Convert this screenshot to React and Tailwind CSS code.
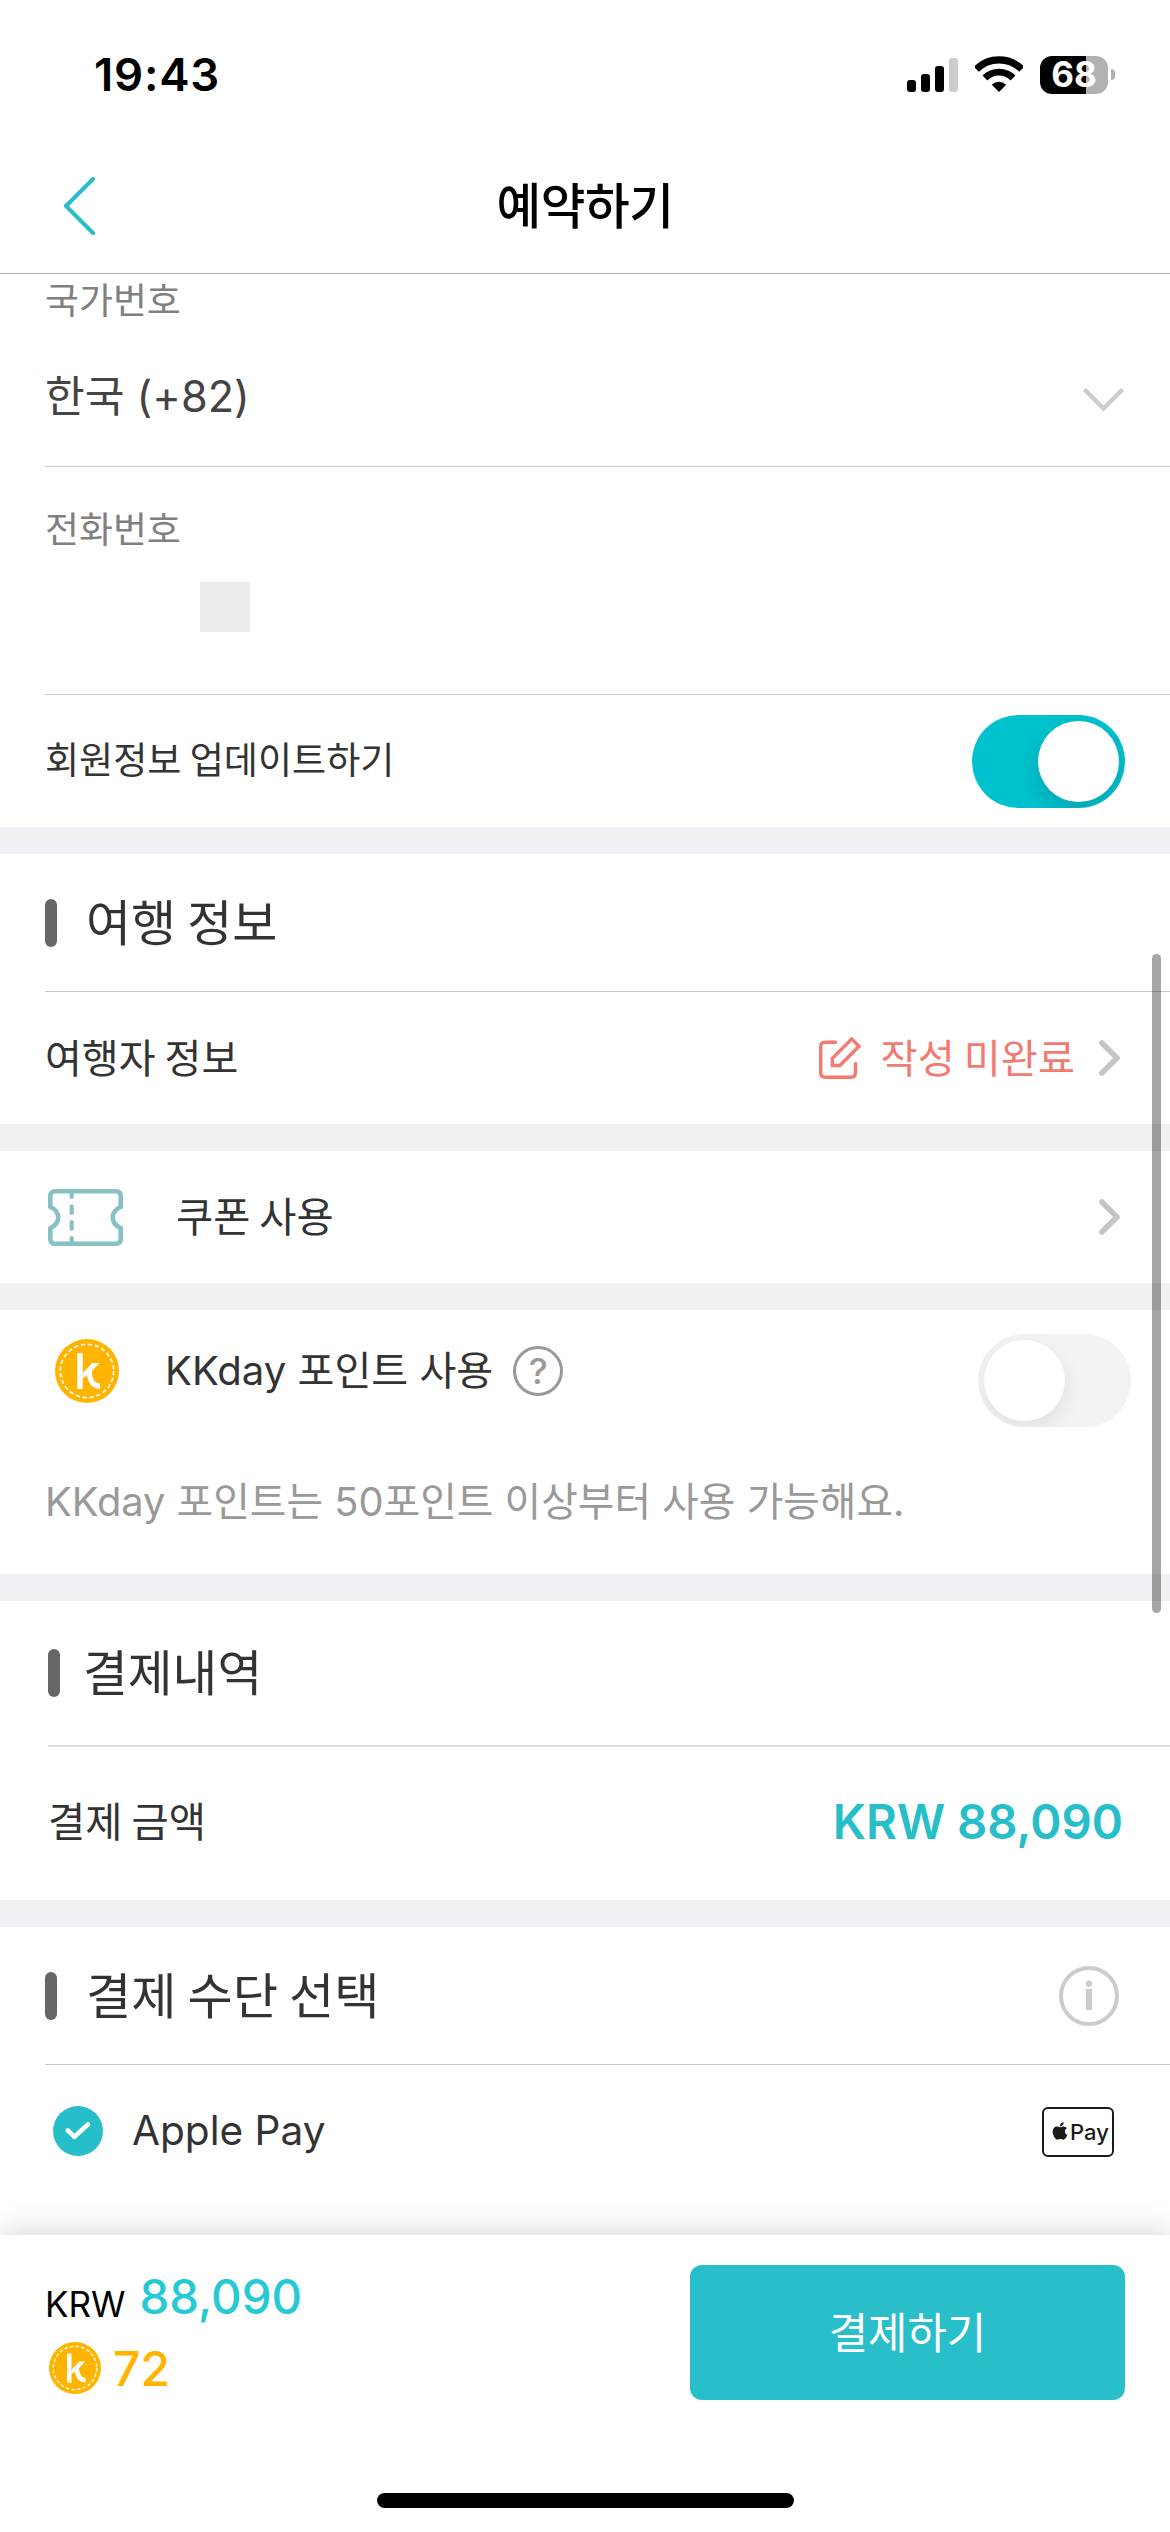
import React from "react";
import { FaApple } from "react-icons/fa";

const hangul = "font-['Noto_Sans_CJK_KR',sans-serif] whitespace-nowrap";
const latin = "font-[Inter,'Noto_Sans_CJK_KR',sans-serif] whitespace-nowrap";

function Signal() {
  return (
    <div className="flex h-[34px] items-end gap-[5px]">
      <div className="h-3 w-[9px] rounded-[3px] bg-black" />
      <div className="h-[18px] w-[9px] rounded-[3px] bg-black" />
      <div className="h-[26px] w-[9px] rounded-[3px] bg-black" />
      <div className="h-[34px] w-[9px] rounded-[3px] bg-[#cccccc]" />
    </div>
  );
}

function Wifi() {
  return (
    <svg width="48" height="36" viewBox="0 0 48 36" fill="none" stroke="#000">
      <path d="M1.3 13.3A32.1 32.1 0 0 1 46.7 13.3" strokeWidth="7.2" />
      <path d="M10 22A19.8 19.8 0 0 1 38 22" strokeWidth="6.8" />
      <path d="M24 36L16.8 28.8A10.2 10.2 0 0 1 31.2 28.8Z" fill="#000" stroke="none" />
    </svg>
  );
}

function Battery() {
  return (
    <div className="flex items-center gap-[3px]">
      <div className="flex h-[38px] w-[68px] items-center justify-center rounded-[12px] bg-linear-to-r from-black from-[68%] to-[#b2b2b2] to-[68%]">
        <span className={`${latin} text-[35px] leading-none font-bold text-white`}>68</span>
      </div>
      <div className="h-[11px] w-1 rounded-r-full bg-[#b2b2b2]" />
    </div>
  );
}

function Toggle({ on }) {
  return (
    <div className={`flex h-[93px] w-[153px] shrink-0 items-center overflow-hidden rounded-full px-1.5 ${on ? "justify-end bg-[#00c2ce]" : "justify-start bg-[#f3f3f3]"}`}>
      <div className={`size-[81px] rounded-full bg-white ${on ? "shadow-[0_9px_24px_rgba(0,0,0,0.15)]" : "shadow-[0_9px_24px_rgba(0,0,0,0.08)]"}`} />
    </div>
  );
}

function ChevronRight() {
  return (
    <svg className="shrink-0" width="21" height="36" viewBox="0 0 21 36" fill="none" stroke="#c5c5c7" strokeWidth="5.6" strokeLinecap="round" strokeLinejoin="round">
      <path d="M2.9 2.9L18 18L2.9 33.1" />
    </svg>
  );
}

function Coin({ size }) {
  return (
    <svg className="shrink-0" width={size} height={size} viewBox="-32 -32 64 64" fill="none">
      <circle r="32" fill="#ffb400" />
      <circle r="26.7" stroke="#fff" strokeWidth="1.7" strokeDasharray="4.2 2.79" />
      <g stroke="#fff" strokeWidth="5.4">
        <path d="M-7 -17.8V18" />
        <path d="M2 -2C2.3 9 5 15.2 13 15.2" />
      </g>
      <path d="M5.2 -8H12.6L2.6 2.6L-4.3 7.6V2.2Z" fill="#fff" />
    </svg>
  );
}

function Ticket() {
  return (
    <svg className="shrink-0" width="75" height="57" viewBox="0 0 75 57" fill="none" stroke="#88c1c3" strokeWidth="4.6" strokeLinecap="round">
      <path d="M7 2.3H68Q72.7 2.3 72.7 7V17.8C67.5 20.3 64.8 24 64.8 28.5S67.5 36.7 72.7 39.2V50Q72.7 54.7 68 54.7H7Q2.3 54.7 2.3 50V39.2C7.5 36.7 10.2 33 10.2 28.5S7.5 20.3 2.3 17.8V7Q2.3 2.3 7 2.3Z" />
      <path d="M23.7 3V8M23.7 17.3V24M23.7 33V39.7M23.7 49V54" strokeWidth="4.2" />
    </svg>
  );
}

function EditIcon() {
  return (
    <svg className="shrink-0" width="42" height="42" viewBox="0 0 42 42" fill="none" stroke="#f17b70" strokeWidth="3.4" strokeLinecap="round">
      <path d="M16.5 5.3H6.2Q1.7 5.3 1.7 9.8V35.8Q1.7 40.3 6.2 40.3H32Q36.5 40.3 36.5 35.8V26.5" />
      <path d="M32.7 2L40 9.3L20.8 28.5H13.3V21.4Z" />
    </svg>
  );
}

function Band() {
  return <div className="h-[27px] shrink-0 bg-[#f0f0f5]" />;
}

function Bar() {
  return <div className="h-12 w-3 shrink-0 rounded-full bg-[#666666]" />;
}

export default function App() {
  return (
    <div className="relative flex h-[2532px] w-[1170px] flex-col overflow-hidden bg-white text-[#333333]">
      <header className="shrink-0 border-b border-[#b2b2b2] text-black">
        <div className="flex h-[149px] items-center justify-between pr-[55px] pl-[94px]">
          <span className={`${latin} text-[45.5px] leading-none font-semibold tracking-[0.8px]`}>19:43</span>
          <div className="flex items-center">
            <Signal />
            <div className="mr-[17px] ml-[17px] -mt-0.5">
              <Wifi />
            </div>
            <Battery />
          </div>
        </div>
        <div className="grid h-[124px] grid-cols-[1fr_auto_1fr] items-center pb-[10px]">
          <svg className="ml-[63px]" width="33" height="58" viewBox="0 0 33 58" fill="none" stroke="#26bec9" strokeWidth="4" strokeLinecap="round" strokeLinejoin="round">
            <path d="M30 2L3 29L30 56" />
          </svg>
          <h1 className={`${hangul} pb-1.5 text-[48.6px] leading-none font-medium tracking-[-0.4px]`}>예약하기</h1>
        </div>
      </header>

      <main className="flex min-h-0 flex-1 flex-col">
        <section className="shrink-0 pl-[45px]">
          <div className="flex h-[193px] flex-col border-b border-[#c8c8cb]">
            <label className={`${hangul} text-[36.9px] leading-[49px] text-[#808080]`}>국가번호</label>
            <div className="flex flex-1 items-center justify-between pt-[5px] pr-[46px]">
              <span className={`${latin} text-[43.2px] leading-none text-[#444444]`}>한국 (+82)</span>
              <svg className="mt-[5px]" width="41" height="24" viewBox="0 0 41 24" fill="none" stroke="#cccccc" strokeWidth="4.4">
                <path d="M1.5 1.5L20.5 20.5L39.5 1.5" />
              </svg>
            </div>
          </div>
          <div className="flex h-[228px] flex-col border-b border-[#c8c8cb] pt-[41px]">
            <label className={`${hangul} text-[36.9px] leading-[38px] text-[#808080]`}>전화번호</label>
            <div className="mt-9 ml-[155px] size-[50px] bg-[#ebebeb]" />
          </div>
          <div className="flex h-[132px] items-center justify-between pr-[45px]">
            <span className={`${hangul} pb-[4px] text-[37.1px] leading-none`}>회원정보 업데이트하기</span>
            <Toggle on />
          </div>
        </section>

        <Band />

        <section className="shrink-0 pl-[45px]">
          <div className="flex h-[138px] items-center gap-[29px] border-b border-[#c8c8cb]">
            <Bar />
            <h2 className={`${hangul} pb-1.5 text-[49px] leading-none`}>여행 정보</h2>
          </div>
          <div className="flex h-[132px] items-center justify-between pr-[50px]">
            <span className={`${hangul} pb-[4px] text-[40.1px] leading-none`}>여행자 정보</span>
            <div className="flex items-center">
              <EditIcon />
              <span className={`${hangul} mr-6 ml-5 pb-[4px] text-[40.3px] leading-none text-[#f17b70]`}>작성 미완료</span>
              <ChevronRight />
            </div>
          </div>
        </section>

        <Band />

        <section className="flex h-[132px] shrink-0 items-center pr-[50px] pl-12">
          <Ticket />
          <span className={`${hangul} ml-[53px] flex-1 pb-[4px] text-[40.4px] leading-none`}>쿠폰 사용</span>
          <ChevronRight />
        </section>

        <Band />

        <section className="h-[264px] shrink-0">
          <div className="flex h-[122px] items-center pr-[39px] pl-[55px]">
            <Coin size={64} />
            <span className={`${latin} ml-[46px] pt-px text-[40.1px] leading-none`}>KKday 포인트 사용</span>
            <div className={`${latin} ml-5 flex size-[50px] items-center justify-center rounded-full border-[3px] border-[#999999] text-[36px] leading-none font-medium text-[#999999]`}>?</div>
            <div className="mt-[19px] ml-auto">
              <Toggle />
            </div>
          </div>
          <p className={`${latin} mt-[50px] ml-[45px] text-[39.8px] leading-10 text-[#999999]`}>KKday 포인트는 50포인트 이상부터 사용 가능해요.</p>
        </section>

        <Band />

        <section className="shrink-0 pl-12">
          <div className="flex h-[146px] items-center gap-[23px] border-b-2 border-[#dcdcdc]">
            <Bar />
            <h2 className={`${hangul} pb-[5px] text-[48.7px] leading-none`}>결제내역</h2>
          </div>
          <div className="flex h-[153px] items-center justify-between pr-[47px] pb-[3px]">
            <span className={`${hangul} pb-[4px] text-[40.5px] leading-none`}>결제 금액</span>
            <span className={`${latin} text-[47.3px] leading-none font-semibold text-[#26bec9]`}>KRW 88,090</span>
          </div>
        </section>

        <Band />

        <section className="shrink-0 pl-[45px]">
          <div className="flex h-[138px] items-center border-b border-[#c8c8cb] pr-[51px]">
            <Bar />
            <h2 className={`${hangul} ml-[29px] flex-1 pb-[5px] text-[49.2px] leading-none`}>결제 수단 선택</h2>
            <svg width="60" height="60" viewBox="-30 -30 60 60" fill="#cccccc">
              <circle r="28" fill="none" stroke="#cccccc" strokeWidth="4" />
              <circle cy="-12.2" r="3.2" />
              <rect x="-3" y="-7" width="6" height="21" />
            </svg>
          </div>
          <div className="flex h-[132px] items-center pr-14 pl-2">
            <svg width="50" height="50" viewBox="-25 -25 50 50">
              <circle r="25" fill="#26bec9" />
              <path d="M-10.2 -0.6L-3.6 5.8L10 -6.6" fill="none" stroke="#fff" strokeWidth="4.6" strokeLinecap="round" strokeLinejoin="round" />
            </svg>
            <span className={`${latin} ml-[29px] flex-1 pt-px text-[40.6px] leading-none`}>Apple Pay</span>
            <div className="mt-0.5 flex h-[50px] w-[72px] items-center rounded-md border-2 border-[#1a1a1a] pl-[6px] text-[#1a1a1a]">
              <FaApple className="-mt-0.5 size-5 shrink-0" />
              <span className={`${latin} text-[22px] leading-none font-medium`}>Pay</span>
            </div>
          </div>
        </section>
      </main>

      <footer className="relative flex h-[297px] shrink-0 flex-col items-center bg-white shadow-[0_0_30px_rgba(0,0,0,0.2)]">
        <div className="flex w-full items-start justify-between pr-[45px] pl-[45px]">
          <div className="pt-8">
            <div className="flex h-[60px] items-center">
              <span className={`${latin} mt-[14px] text-[35px] leading-none text-black`}>KRW</span>
              <span className={`${latin} ml-3.5 text-[47.3px] leading-none font-medium text-[#26c9d4]`}>88,090</span>
            </div>
            <div className="mt-[11px] flex h-[60px] items-center pl-[4px]">
              <Coin size={52} />
              <span className={`${latin} ml-3 pt-px text-[48px] leading-none font-medium text-[#ffb400]`}>72</span>
            </div>
          </div>
          <button className="mt-[30px] flex h-[135px] w-[435px] items-center justify-center rounded-xl bg-[#28beca] text-white">
            <span className={`${hangul} pb-[5px] text-[42.8px] leading-none`}>결제하기</span>
          </button>
        </div>
        <div className="mt-auto mb-6 h-[15px] w-[417px] rounded-full bg-black" />
      </footer>

      <div className="absolute top-[954px] right-[9px] h-[659px] w-[9px] rounded-full bg-black/35" />
    </div>
  );
}
